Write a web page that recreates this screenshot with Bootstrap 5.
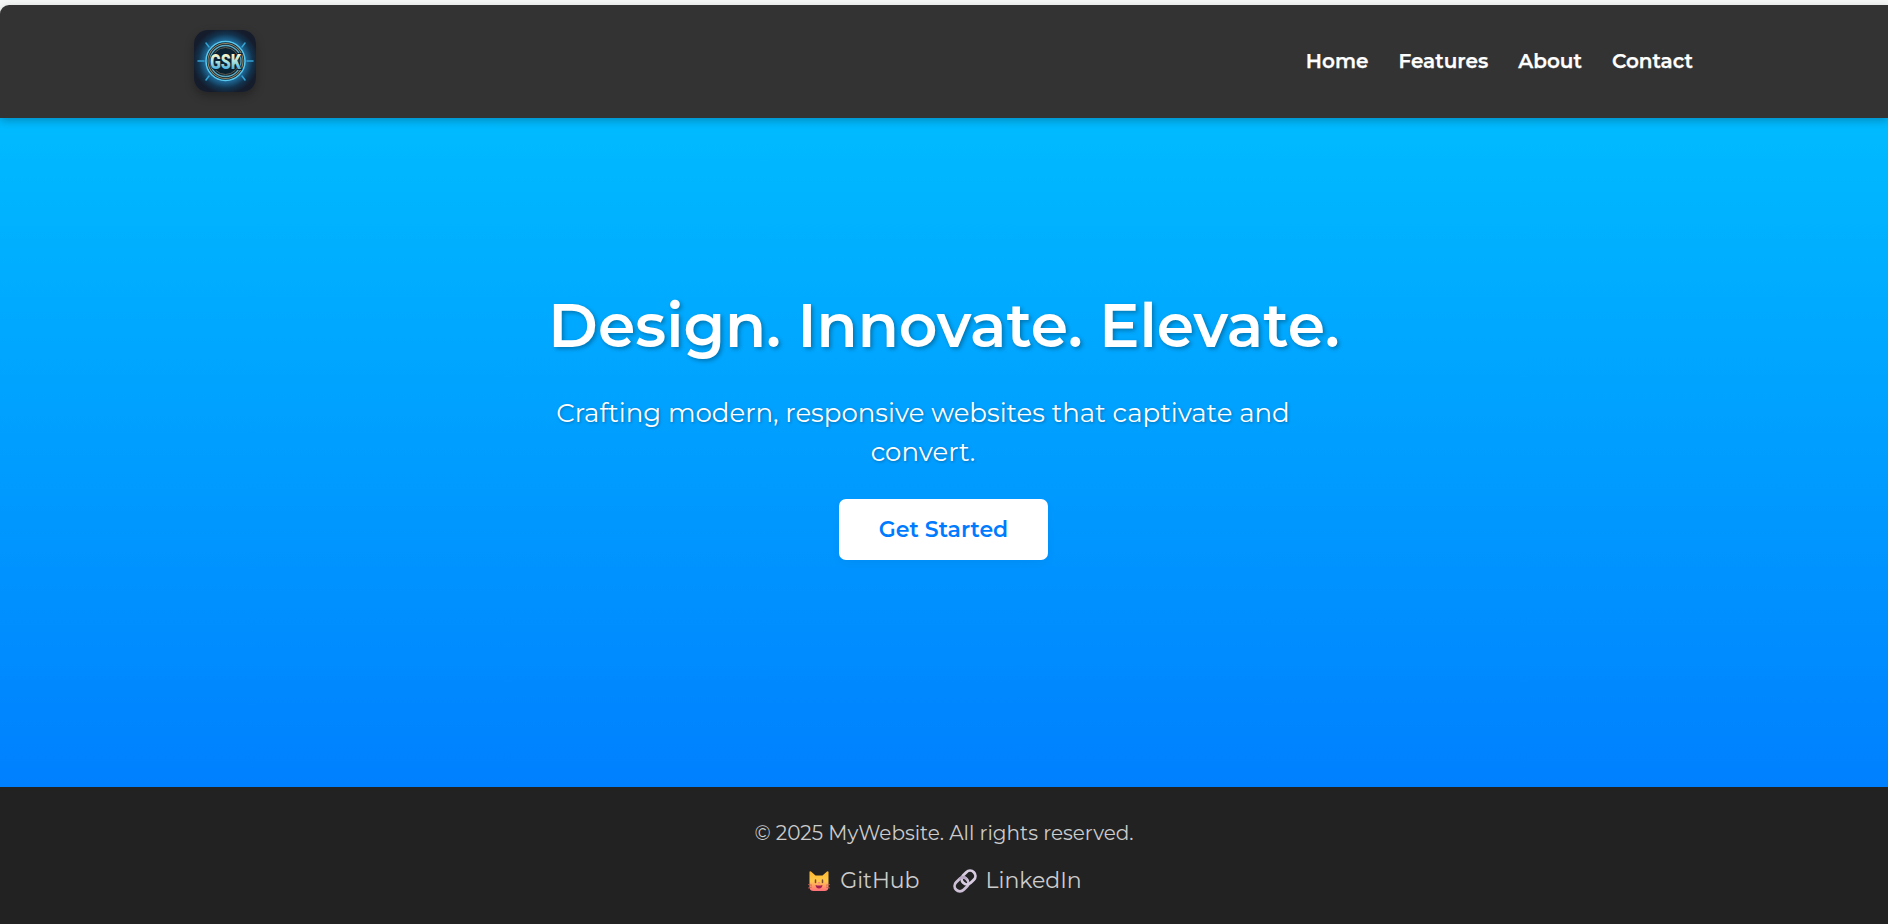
<!DOCTYPE html>
<html lang="en">
<head>
<meta charset="utf-8">
<meta name="viewport" content="width=device-width, initial-scale=1">
<title>MyWebsite</title>
<link href="https://cdn.jsdelivr.net/npm/bootstrap@5.3.0/dist/css/bootstrap.min.css" rel="stylesheet">
<style>
body { font-family: Montserrat, Inter, "Open Sans", sans-serif; background: #f5f6f6; padding-top: 5px; height: 100vh; overflow: hidden; }
.page-wrap { width: 1500px; }
.site-head { height: 113px; flex: none; background: #333; border-top-left-radius: 9px; box-shadow: 0 3px 8px rgba(0,0,0,.24); z-index: 1; padding-bottom: 1px; }
.brand-logo { width: 62px; height: 62px; border-radius: 14px; box-shadow: 0 4px 10px rgba(0,0,0,.3); }
.main-links { gap: 30px; font-size: 20px; margin-right: 1px; }
.main-links a { color: #fff; font-weight: 600; line-height: 30px; text-decoration: none; -webkit-text-stroke: .25px #fff; }
.hero { height: 669px; flex: none; background: linear-gradient(#00bbff, #0080ff); color: #fff; padding-top: 172px; }
.hero-inner { width: 794px; }
.hero h1 { font-size: 60px; line-height: 72px; font-weight: 600; margin-bottom: 32px; white-space: nowrap; text-shadow: 2px 2px 4px rgba(0,0,0,.3); }
.hero p { width: 752px; font-size: 26px; line-height: 39px; margin-bottom: 27px; text-shadow: 1px 1px 3px rgba(0,0,0,.3); }
.btn-start { width: 209px; height: 61px; background: #fff; color: #007bff; border: 0; border-radius: 7px; font-size: 22px; font-weight: 600; box-shadow: 0 4px 10px rgba(0,0,0,.04); margin-right: 2px; padding-left: 13px; }
.site-foot { background: #222; color: #ccc; padding-top: 31px; }
.site-foot p { font-size: 20px; line-height: 30px; margin-bottom: 17px; }
.foot-links { gap: 33px; font-size: 22px; line-height: 32px; padding-left: 1px; }
.foot-links a { color: #ccc; text-decoration: none; gap: 9px; }
</style>
</head>
<body class="d-flex flex-column">
<header class="site-head position-relative d-flex">
  <div class="page-wrap mx-auto d-flex align-items-center justify-content-between">
    <svg class="brand-logo" viewBox="0 0 62 62" role="img" aria-label="GSK">
      <defs>
        <radialGradient id="glow"><stop offset="0" stop-color="#071c2a"/><stop offset=".5" stop-color="#1a76a8"/><stop offset=".64" stop-color="#1d628e"/><stop offset=".82" stop-color="#12334d"/><stop offset="1" stop-color="#151c2c"/></radialGradient>
        <linearGradient id="letters" x2="0" y2="1"><stop offset=".2" stop-color="#fbf5c8"/><stop offset=".52" stop-color="#a5dfdf"/><stop offset=".85" stop-color="#3fa9dc"/></linearGradient>
      </defs>
      <rect width="62" height="62" fill="#151c2c"/>
      <circle cx="31.500" cy="31" r="33" fill="url(#glow)"/>
      <g stroke="#35a4d4" stroke-width="1.500" stroke-linecap="round">
        <path d="M4 31h6M53 31h6M12 13l3 4M51 13l-3 4M12 50l3-4M51 50l-3-4"/>
      </g>
      <circle cx="31.500" cy="31" r="19.500" fill="#0a2232" stroke="#59c8ef" stroke-width="1.500"/>
      <circle cx="31.500" cy="31" r="17.500" fill="none" stroke="#8e8061" stroke-width="1.200"/>
      <circle cx="31.500" cy="31" r="15.500" fill="none" stroke="#5faac2" stroke-width="1.300"/>
      <circle cx="31.500" cy="31" r="13.500" fill="none" stroke="#625e50"/>
      <text x="31.500" y="38.500" text-anchor="middle" textLength="31" lengthAdjust="spacingAndGlyphs" font-family="Roboto, sans-serif" font-size="21" font-weight="900" fill="url(#letters)" stroke="#082135" stroke-width="2" paint-order="stroke">GSK</text>
    </svg>
    <nav>
      <ul class="main-links list-unstyled d-flex mb-0">
        <li><a href="#">Home</a></li>
        <li><a href="#">Features</a></li>
        <li><a href="#">About</a></li>
        <li><a href="#">Contact</a></li>
      </ul>
    </nav>
  </div>
</header>
<main class="hero">
  <div class="hero-inner mx-auto text-center">
    <h1>Design. Innovate. Elevate.</h1>
    <p>Crafting modern, responsive websites that captivate and convert.</p>
    <a class="btn btn-start d-inline-flex align-items-center justify-content-center" href="#">Get Started</a>
  </div>
</main>
<footer class="site-foot flex-grow-1 text-center">
  <p>© 2025 MyWebsite. All rights reserved.</p>
  <div class="foot-links d-flex justify-content-center">
    <a class="d-flex align-items-center" href="#">
      <svg width="24" height="24" viewBox="0 0 24 24" aria-hidden="true">
        <defs><linearGradient id="fur" x2="0" y2="1"><stop offset="0" stop-color="#ffb72e"/><stop offset=".5" stop-color="#ffc94c"/><stop offset="1" stop-color="#ff6f7c"/></linearGradient></defs>
        <path d="M2.500 2.800Q2.800 1.800 4 2.500L8.500 6.500h7L20 2.500q1.300-.7 1.500.4V18q0 4-4 4h-11q-4 0-4-4z" fill="url(#fur)"/>
        <path d="M8.500 11v2.500M15.500 11v2.500" stroke="#7b4935" stroke-width="1.500" stroke-linecap="round"/>
        <path d="M11 13.500h2l-1 1z" fill="#e63cbc"/>
        <path d="M8.500 16q3.500 1 7 0-.5 3.500-3.500 3.500T8.500 16z" fill="#a51e51"/>
        <path d="M1 15.500l4 .7M1 19l4-1M23 15.500l-4 .7M23 19l-4-1" stroke="#c65c54" stroke-width=".8"/>
      </svg>
      <span>GitHub</span>
    </a>
    <a class="d-flex align-items-center" href="#">
      <svg width="24" height="24" viewBox="0 0 24 24" fill="none" aria-hidden="true">
        <g transform="rotate(-45 12 12)" stroke-width="2.800">
          <rect x="-.5" y="6.700" width="15" height="10.600" rx="5.300" stroke="#cdbfd6"/>
          <rect x="9.500" y="6.700" width="15" height="10.600" rx="5.300" stroke="#d8cce0"/>
          <path d="M9.200 6.700q5.300 0 5.300 5.300" stroke="#b9a9c4"/>
        </g>
      </svg>
      <span>LinkedIn</span>
    </a>
  </div>
</footer>
<script src="https://cdn.jsdelivr.net/npm/bootstrap@5.3.0/dist/js/bootstrap.bundle.min.js"></script>
</body>
</html>
